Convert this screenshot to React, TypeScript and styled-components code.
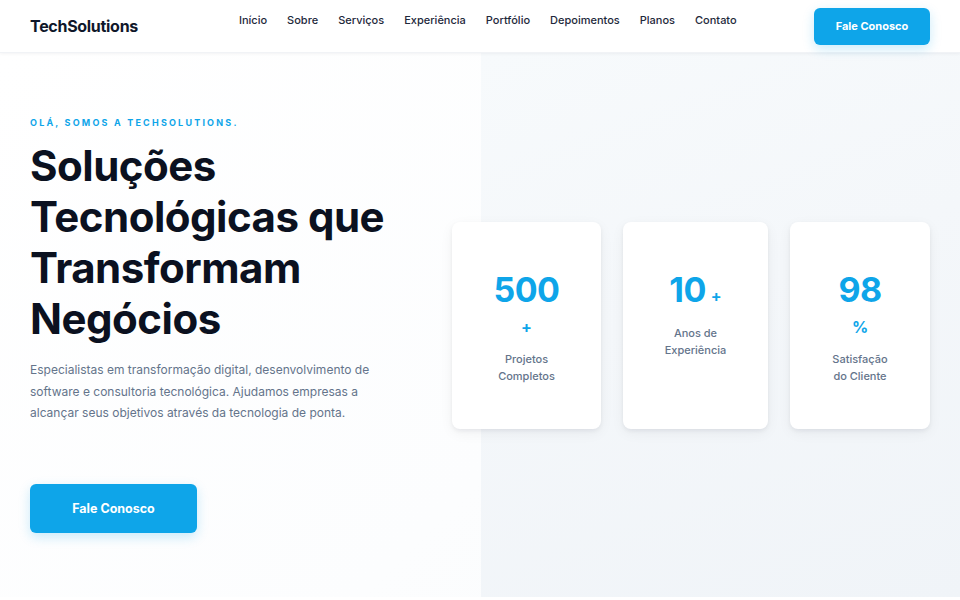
import React from "react";
import styled, { createGlobalStyle } from "styled-components";

const Global = createGlobalStyle`
  * { box-sizing: border-box; }
  html, body { margin: 0; padding: 0; background: #ffffff; }
  body { font-family: Inter, "Noto Sans", sans-serif; color: #0f172a; -webkit-font-smoothing: antialiased; }
`;

const Page = styled.div`
  width: 960px;
  height: 600px;
  overflow: hidden;
  background: #ffffff;
`;

const Header = styled.header`
  position: relative;
  z-index: 2;
  height: 53px;
  display: flex;
  align-items: center;
  padding: 0 30px;
  background: #ffffff;
  box-shadow: 0 1px 3px rgba(15, 23, 42, 0.05);
  border-bottom: 1px solid #f1f3f6;
`;

const Logo = styled.div`
  font-size: 16px;
  font-weight: 700;
  letter-spacing: -0.3px;
  color: #0f172a;
`;

const Nav = styled.nav`
  align-self: flex-start;
  display: flex;
  gap: 20px;
  padding-top: 13px;
  margin-left: 101px;
  margin-right: auto;
`;

const NavLink = styled.a`
  font-size: 11px;
  font-weight: 500;
  color: #1e293b;
  text-decoration: none;
`;

const PrimaryButton = styled.button<{ $large?: boolean }>`
  border: none;
  cursor: pointer;
  font-family: inherit;
  font-weight: 700;
  color: #ffffff;
  background: #0ea5e9;
  border-radius: 6px;
  width: ${(p) => (p.$large ? "167px" : "116px")};
  height: ${(p) => (p.$large ? "49px" : "37px")};
  font-size: ${(p) => (p.$large ? "12.5px" : "11px")};
  box-shadow: 0 4px 12px rgba(14, 165, 233, 0.22);
`;

const Hero = styled.section`
  position: relative;
  height: 544px;
  display: grid;
  grid-template-columns: 400px 478px;
  column-gap: 22px;
  align-items: center;
  padding: 0 30px;
  background: linear-gradient(135deg, #ffffff 0%, #fcfdfe 60%, #f9fbfc 100%);
  &::before {
    content: "";
    position: absolute;
    top: 0;
    bottom: 0;
    left: 481px;
    right: 0;
    background: linear-gradient(160deg, #f7fafc 0%, #f4f7fa 45%, #f0f4f8 100%);
  }
`;

const Intro = styled.div`
  position: relative;
  display: flex;
  flex-direction: column;
  align-items: flex-start;
`;

const Eyebrow = styled.div`
  font-size: 9px;
  font-weight: 700;
  letter-spacing: 2.2px;
  color: #0ea5e9;
  text-transform: uppercase;
`;

const Title = styled.h1`
  margin: 12px 0 0;
  font-size: 42px;
  line-height: 51px;
  font-weight: 700;
  letter-spacing: -0.5px;
  color: #0b1120;
`;

const Lead = styled.p`
  margin: 15px 0 0;
  font-size: 12px;
  line-height: 21.5px;
  color: #64748b;
  max-width: 370px;
`;

const CtaRow = styled.div`
  margin-top: 60px;
`;

const Stats = styled.div`
  position: relative;
  display: grid;
  grid-template-columns: 149px 145px 140px;
  column-gap: 22px;
`;

const Card = styled.div`
  background: #ffffff;
  border-radius: 8px;
  box-shadow: 0 2px 4px rgba(15, 23, 42, 0.06), 0 4px 14px rgba(15, 23, 42, 0.05);
  height: 207px;
  padding: 47px 16px 0;
  display: flex;
  flex-direction: column;
  align-items: center;
  text-align: center;
`;

const Value = styled.div<{ $wrap?: boolean }>`
  font-size: 34px;
  line-height: 41px;
  font-weight: 700;
  color: #0ea5e9;
  letter-spacing: -0.5px;
  padding-bottom: ${(p) => (p.$wrap ? "0" : "2px")};
`;

const Suffix = styled.span<{ $block?: boolean }>`
  display: ${(p) => (p.$block ? "block" : "inline")};
  font-size: 16px;
  line-height: ${(p) => (p.$block ? "22px" : "1")};
  font-weight: 700;
  letter-spacing: 0;
  margin-top: ${(p) => (p.$block ? "6px" : "0")};
  margin-left: ${(p) => (p.$block ? "0" : "5px")};
`;

const Label = styled.div`
  margin-top: 13px;
  font-size: 11px;
  line-height: 17px;
  font-weight: 500;
  color: #64748b;
`;

const navItems = ["Início", "Sobre", "Serviços", "Experiência", "Portfólio", "Depoimentos", "Planos", "Contato"];

const stats = [
  { value: "500", suffix: "+", wrap: true, label: ["Projetos", "Completos"] },
  { value: "10", suffix: "+", wrap: false, label: ["Anos de", "Experiência"] },
  { value: "98", suffix: "%", wrap: true, label: ["Satisfação", "do Cliente"] },
];

export default function App() {
  return (
    <Page>
      <Global />
      <Header>
        <Logo>TechSolutions</Logo>
        <Nav>
          {navItems.map((n) => (
            <NavLink key={n} href="#">
              {n}
            </NavLink>
          ))}
        </Nav>
        <PrimaryButton>Fale Conosco</PrimaryButton>
      </Header>
      <Hero>
        <Intro>
          <Eyebrow>Olá, somos a TechSolutions.</Eyebrow>
          <Title>
            Soluções
            <br />
            Tecnológicas que
            <br />
            Transformam
            <br />
            Negócios
          </Title>
          <Lead>
            Especialistas em transformação digital, desenvolvimento de software e consultoria tecnológica. Ajudamos
            empresas a alcançar seus objetivos através da tecnologia de ponta.
          </Lead>
          <CtaRow>
            <PrimaryButton $large>Fale Conosco</PrimaryButton>
          </CtaRow>
        </Intro>
        <Stats>
          {stats.map((s) => (
            <Card key={s.value}>
              <Value $wrap={s.wrap}>
                {s.value}
                <Suffix $block={s.wrap}>{s.suffix}</Suffix>
              </Value>
              <Label>
                {s.label[0]}
                <br />
                {s.label[1]}
              </Label>
            </Card>
          ))}
        </Stats>
      </Hero>
    </Page>
  );
}
